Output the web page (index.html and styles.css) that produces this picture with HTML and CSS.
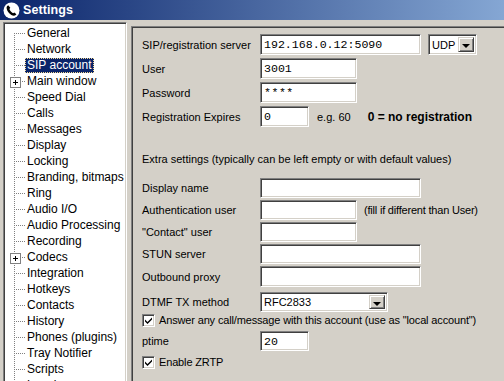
FILE: index.html
```html
<!DOCTYPE html>
<html>
<head>
<meta charset="utf-8">
<link rel="stylesheet" href="styles.css">
</head>
<body>
<div class="window">
  <div class="titlebar">
    <svg class="appicon" width="17" height="17" viewBox="0 0 17 17">
      <circle cx="8.5" cy="8.5" r="8" fill="#fff"/>
      <path d="M5.2 3.2c-.9.5-1.6 1.4-1.6 2.6 0 3.6 3.9 7.9 7.4 7.9 1.1 0 1.9-.6 2.4-1.4l-2.1-1.9-1.2.8C8.7 10.5 6.8 8.4 6.4 6.9l.9-1.1z" fill="#000"/>
    </svg>
    <span class="title">Settings</span>
  </div>
  <div class="body">
    <div class="tree">
      <div class="node first">General</div>
      <div class="node">Network</div>
      <div class="node"><span class="sel">SIP account</span></div>
      <div class="node expandable">Main window</div>
      <div class="node">Speed Dial</div>
      <div class="node">Calls</div>
      <div class="node">Messages</div>
      <div class="node">Display</div>
      <div class="node">Locking</div>
      <div class="node">Branding, bitmaps</div>
      <div class="node">Ring</div>
      <div class="node">Audio I/O</div>
      <div class="node">Audio Processing</div>
      <div class="node">Recording</div>
      <div class="node expandable">Codecs</div>
      <div class="node">Integration</div>
      <div class="node">Hotkeys</div>
      <div class="node">Contacts</div>
      <div class="node">History</div>
      <div class="node">Phones (plugins)</div>
      <div class="node">Tray Notifier</div>
      <div class="node">Scripts</div>
      <div class="node">Logging</div>
    </div>
    <div class="panel">
      <div class="row r1">
        <span class="label">SIP/registration server</span>
        <div class="field mono w-long">192.168.0.12:5090</div>
        <div class="select w-udp"><span class="seltext">UDP</span><span class="arrow"></span></div>
      </div>
      <div class="row r1">
        <span class="label">User</span>
        <div class="field mono w-mid">3001</div>
      </div>
      <div class="row r1">
        <span class="label">Password</span>
        <div class="field mono w-mid pw">****</div>
      </div>
      <div class="row r1">
        <span class="label">Registration Expires</span>
        <div class="field mono w-short">0</div>
        <span class="hint">e.g. 60</span>
        <span class="bold">0 = no registration</span>
      </div>

      <div class="section-title">Extra settings (typically can be left empty or with default values)</div>

      <div class="row r2 first2">
        <span class="label">Display name</span>
        <div class="field w-long"></div>
      </div>
      <div class="row r2">
        <span class="label">Authentication user</span>
        <div class="field w-mid"></div>
        <span class="note">(fill if different than User)</span>
      </div>
      <div class="row r2">
        <span class="label">"Contact" user</span>
        <div class="field w-mid"></div>
      </div>
      <div class="row r2">
        <span class="label">STUN server</span>
        <div class="field w-long"></div>
      </div>
      <div class="row r2 tall">
        <span class="label">Outbound proxy</span>
        <div class="field w-long"></div>
      </div>
      <div class="row r2 dtmf">
        <span class="label">DTMF TX method</span>
        <div class="select w-dtmf"><span class="seltext">RFC2833</span><span class="arrow"></span></div>
      </div>
      <div class="row check-row">
        <span class="checkbox"><svg width="9" height="9" viewBox="0 0 9 9"><path d="M1 3.5 L3.5 6 L8 1.5 L8 3.5 L3.5 8 L1 5.5 Z" fill="#000"/></svg></span>
        <span class="check-label">Answer any call/message with this account (use as "local account")</span>
      </div>
      <div class="row r2 ptime">
        <span class="label">ptime</span>
        <div class="field mono w-short">20</div>
      </div>
      <div class="row check-row zrtp">
        <span class="checkbox"><svg width="9" height="9" viewBox="0 0 9 9"><path d="M1 3.5 L3.5 6 L8 1.5 L8 3.5 L3.5 8 L1 5.5 Z" fill="#000"/></svg></span>
        <span class="check-label">Enable ZRTP</span>
      </div>
    </div>
  </div>
</div>
</body>
</html>
```

FILE: styles.css
```css
* { box-sizing: border-box; }
html, body {
  margin: 0;
  padding: 0;
  width: 504px;
  height: 381px;
  overflow: hidden;
  background: #d4d0c8;
  font-family: "Liberation Sans", Arial, sans-serif;
  font-size: 11px;
  color: #000;
}
.window {
  width: 504px;
  height: 381px;
  overflow: hidden;
  background: #d4d0c8;
}
.titlebar {
  height: 20px;
  display: flex;
  align-items: center;
  padding-left: 3px;
  background: linear-gradient(to right, #0a246a 0px, #a6caf0 640px);
}
.appicon { display: block; margin-right: 3px; }
.title {
  color: #fff;
  font-weight: bold;
  font-size: 12.5px;
  letter-spacing: 0.1px;
}
.body {
  display: flex;
  align-items: flex-start;
  padding: 2px 0 0 3px;
}
.tree {
  width: 124px;
  height: 400px;
  flex: none;
  background: #fff;
  border: 1px solid;
  border-color: #808080 #ffffff #ffffff #808080;
  box-shadow: inset 1px 1px 0 #404040, inset -1px -1px 0 #d4d0c8;
  padding: 2px 0 0 2px;
  font-size: 12px;
}
.node {
  position: relative;
  height: 16px;
  line-height: 16px;
  padding-left: 21px;
  white-space: nowrap;
}
.node::before {
  content: "";
  position: absolute;
  left: 8px;
  top: 0;
  width: 1px;
  height: 16px;
  background: repeating-linear-gradient(to bottom, #808080 0 1px, transparent 1px 2px);
}
.node.first::before { top: 8px; height: 8px; }
.node::after {
  content: "";
  position: absolute;
  left: 9px;
  top: 8px;
  width: 10px;
  height: 1px;
  background: repeating-linear-gradient(to right, transparent 0 1px, #808080 1px 2px);
}
.node.expandable::after {
  left: 4px;
  top: 4px;
  width: 9px;
  height: 9px;
  border: 1px solid #808080;
  background:
    linear-gradient(#000, #000) center / 5px 1px no-repeat,
    linear-gradient(#000, #000) center / 1px 5px no-repeat,
    #fff;
}
.node.expandable {
  background: repeating-linear-gradient(to right, transparent 0 1px, #808080 1px 2px) 13px 8px / 6px 1px no-repeat;
}
.sel {
  display: inline-block;
  margin-left: -2px;
  padding: 0 2px 0 2px;
  line-height: 14px;
  height: 15px;
  background: #0a246a;
  color: #fff;
  outline: 1px dotted #f5db95;
  outline-offset: -1px;
}
.panel {
  margin: 4px 0 0 4px;
  width: 400px;
  height: 400px;
  flex: none;
  border: 1px solid;
  border-color: #808080 #ffffff #ffffff #808080;
  box-shadow: inset 1px 1px 0 #404040;
  padding: 7px 0 0 10px;
  display: flex;
  flex-direction: column;
}
.row {
  display: flex;
  align-items: center;
  flex: none;
  white-space: nowrap;
}
.r1 { height: 21px; margin-bottom: 3px; }
.r2 { height: 20px; margin-bottom: 2px; }
.label { width: 118px; flex: none; }
.field {
  height: 100%;
  background: #fff;
  border: 1px solid;
  border-color: #808080 #ffffff #ffffff #808080;
  box-shadow: inset 1px 1px 0 #404040, inset -1px -1px 0 #d4d0c8;
  padding: 0 3px;
  display: flex;
  align-items: center;
  flex: none;
}
.mono {
  font-family: "Liberation Mono", "DejaVu Sans Mono", monospace;
  font-size: 11.6px;
}
.pw { letter-spacing: 0.5px; }
.w-long { width: 161px; }
.w-mid { width: 97px; }
.w-short { width: 49px; }
.w-udp { width: 49px; margin-left: 7px; }
.w-dtmf { width: 128px; }
.select {
  height: 100%;
  background: #fff;
  border: 1px solid;
  border-color: #808080 #ffffff #ffffff #808080;
  box-shadow: inset 1px 1px 0 #404040, inset -1px -1px 0 #d4d0c8;
  padding: 2px;
  display: flex;
  align-items: stretch;
  flex: none;
}
.seltext {
  flex: 1;
  display: flex;
  align-items: center;
  padding-left: 1px;
}
.arrow {
  width: 16px;
  flex: none;
  background: #d4d0c8;
  border: 1px solid;
  border-color: #d4d0c8 #404040 #404040 #d4d0c8;
  box-shadow: inset 1px 1px 0 #fff, inset -1px -1px 0 #808080;
  position: relative;
}
.arrow::after {
  content: "";
  position: absolute;
  left: 3px;
  top: 6px;
  border-left: 4px solid transparent;
  border-right: 4px solid transparent;
  border-top: 4px solid #000;
}
.hint { margin-left: 8px; }
.bold { margin-left: 17px; font-weight: bold; font-size: 12px; }
.note { margin-left: 7px; letter-spacing: -0.2px; }
.section-title {
  height: 16px;
  line-height: 16px;
  margin-top: 21px;
  flex: none;
}
.first2 { margin-top: 11px; }
.tall { height: 21px; }
.dtmf { margin-top: 3px; margin-bottom: 0; }
.check-row { height: 16px; }
.checkbox {
  width: 13px;
  height: 13px;
  flex: none;
  background: #fff;
  border: 1px solid;
  border-color: #808080 #ffffff #ffffff #808080;
  box-shadow: inset 1px 1px 0 #404040, inset -1px -1px 0 #d4d0c8;
  display: flex;
  align-items: center;
  justify-content: center;
}
.checkbox svg { display: block; }
.check-label { margin-left: 4px; letter-spacing: -0.15px; }
.ptime { margin-top: 3px; margin-bottom: 0; }
.zrtp { margin-top: 3px; }
```
